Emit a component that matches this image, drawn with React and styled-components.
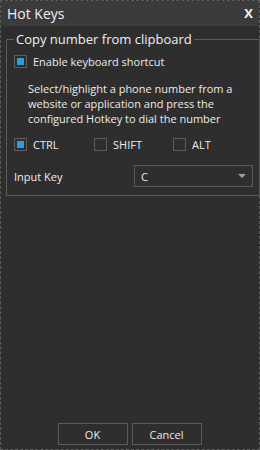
import React from "react";
import styled, { createGlobalStyle } from "styled-components";

const Global = createGlobalStyle`
  html, body { margin: 0; padding: 0; background: #2e2e2e; }
  body { font-family: "Open Sans", "Noto Sans", sans-serif; color: #ececec; }
  * { box-sizing: border-box; }
`;

const Window = styled.div`
  width: 260px;
  height: 450px;
  border: 1px dashed #5c5c5c;
  background: #2e2e2e;
  display: flex;
  flex-direction: column;
`;

const TitleBar = styled.div`
  height: 25px;
  background: #3b3b3b;
  display: flex;
  align-items: center;
  justify-content: space-between;
  padding: 0 4px 0 6px;
`;

const Title = styled.span`
  font-size: 14px;
  color: #f0f0f0;
  line-height: 1;
`;

const Close = styled.span`
  font-size: 13px;
  font-weight: 700;
  color: #f4f4f4;
  line-height: 1;
  padding-right: 2px;
`;

const Body = styled.div`
  flex: 1;
  display: flex;
  flex-direction: column;
  padding: 3px 3px 4px 5px;
`;

const Group = styled.fieldset`
  margin: 0;
  border: 1px solid #5a5a5a;
  padding: 4px 6px 8px 7px;
  display: flex;
  flex-direction: column;
`;

const Legend = styled.legend`
  font-size: 13px;
  padding: 0 2px;
  margin-left: 0;
  line-height: 20px;
  color: #f0f0f0;
`;

const Row = styled.div`
  display: flex;
  align-items: center;
  height: ${(p) => p.$h || 16}px;
  margin-top: ${(p) => p.$mt || 0}px;
`;

const Check = styled.label`
  display: flex;
  align-items: center;
  gap: 6px;
  font-size: 11px;
  width: ${(p) => (p.$w ? p.$w + "px" : "auto")};
`;

const Box = styled.span`
  width: 13px;
  height: 13px;
  border: 1px solid #5e5e5e;
  display: flex;
  align-items: center;
  justify-content: center;
  flex: none;
  &::after {
    content: "";
    width: 7px;
    height: 7px;
    background: ${(p) => (p.$on ? "#2a9de4" : "transparent")};
  }
`;

const Para = styled.p`
  margin: 12px 0 0 14px;
  font-size: 11px;
  line-height: 15px;
`;

const Label = styled.span`
  font-size: 11px;
  width: 120px;
  flex: none;
`;

const Select = styled.div`
  width: 119px;
  height: 22px;
  border: 1px solid #5a5a5a;
  display: flex;
  align-items: center;
  justify-content: space-between;
  padding: 0 6px 0 6px;
  font-size: 11px;
`;

const Arrow = styled.span`
  width: 0;
  height: 0;
  border-left: 4px solid transparent;
  border-right: 4px solid transparent;
  border-top: 4px solid #a0a0a0;
`;

const Spacer = styled.div`
  flex: 1;
`;

const Buttons = styled.div`
  display: flex;
  justify-content: center;
  gap: 4px;
  padding-right: 3px;
`;

const Button = styled.button`
  width: 70px;
  height: 22px;
  background: transparent;
  border: 1px solid #5a5a5a;
  color: #ececec;
  font-family: inherit;
  font-size: 11px;
  padding: 0;
`;

export default function App() {
  return (
    <>
      <Global />
      <Window>
        <TitleBar>
          <Title>Hot Keys</Title>
          <Close>X</Close>
        </TitleBar>
        <Body>
          <Group>
            <Legend>Copy number from clipboard</Legend>
            <Row>
              <Check>
                <Box $on />
                Enable keyboard shortcut
              </Check>
            </Row>
            <Para>
              Select/highlight a phone number from a website or application and press the configured Hotkey to dial the number
            </Para>
            <Row $mt={10}>
              <Check $w={80}>
                <Box $on />
                CTRL
              </Check>
              <Check $w={79}>
                <Box />
                SHIFT
              </Check>
              <Check>
                <Box />
                ALT
              </Check>
            </Row>
            <Row $h={22} $mt={13}>
              <Label>Input Key</Label>
              <Select>
                C
                <Arrow />
              </Select>
            </Row>
          </Group>
          <Spacer />
          <Buttons>
            <Button>OK</Button>
            <Button>Cancel</Button>
          </Buttons>
        </Body>
      </Window>
    </>
  );
}
